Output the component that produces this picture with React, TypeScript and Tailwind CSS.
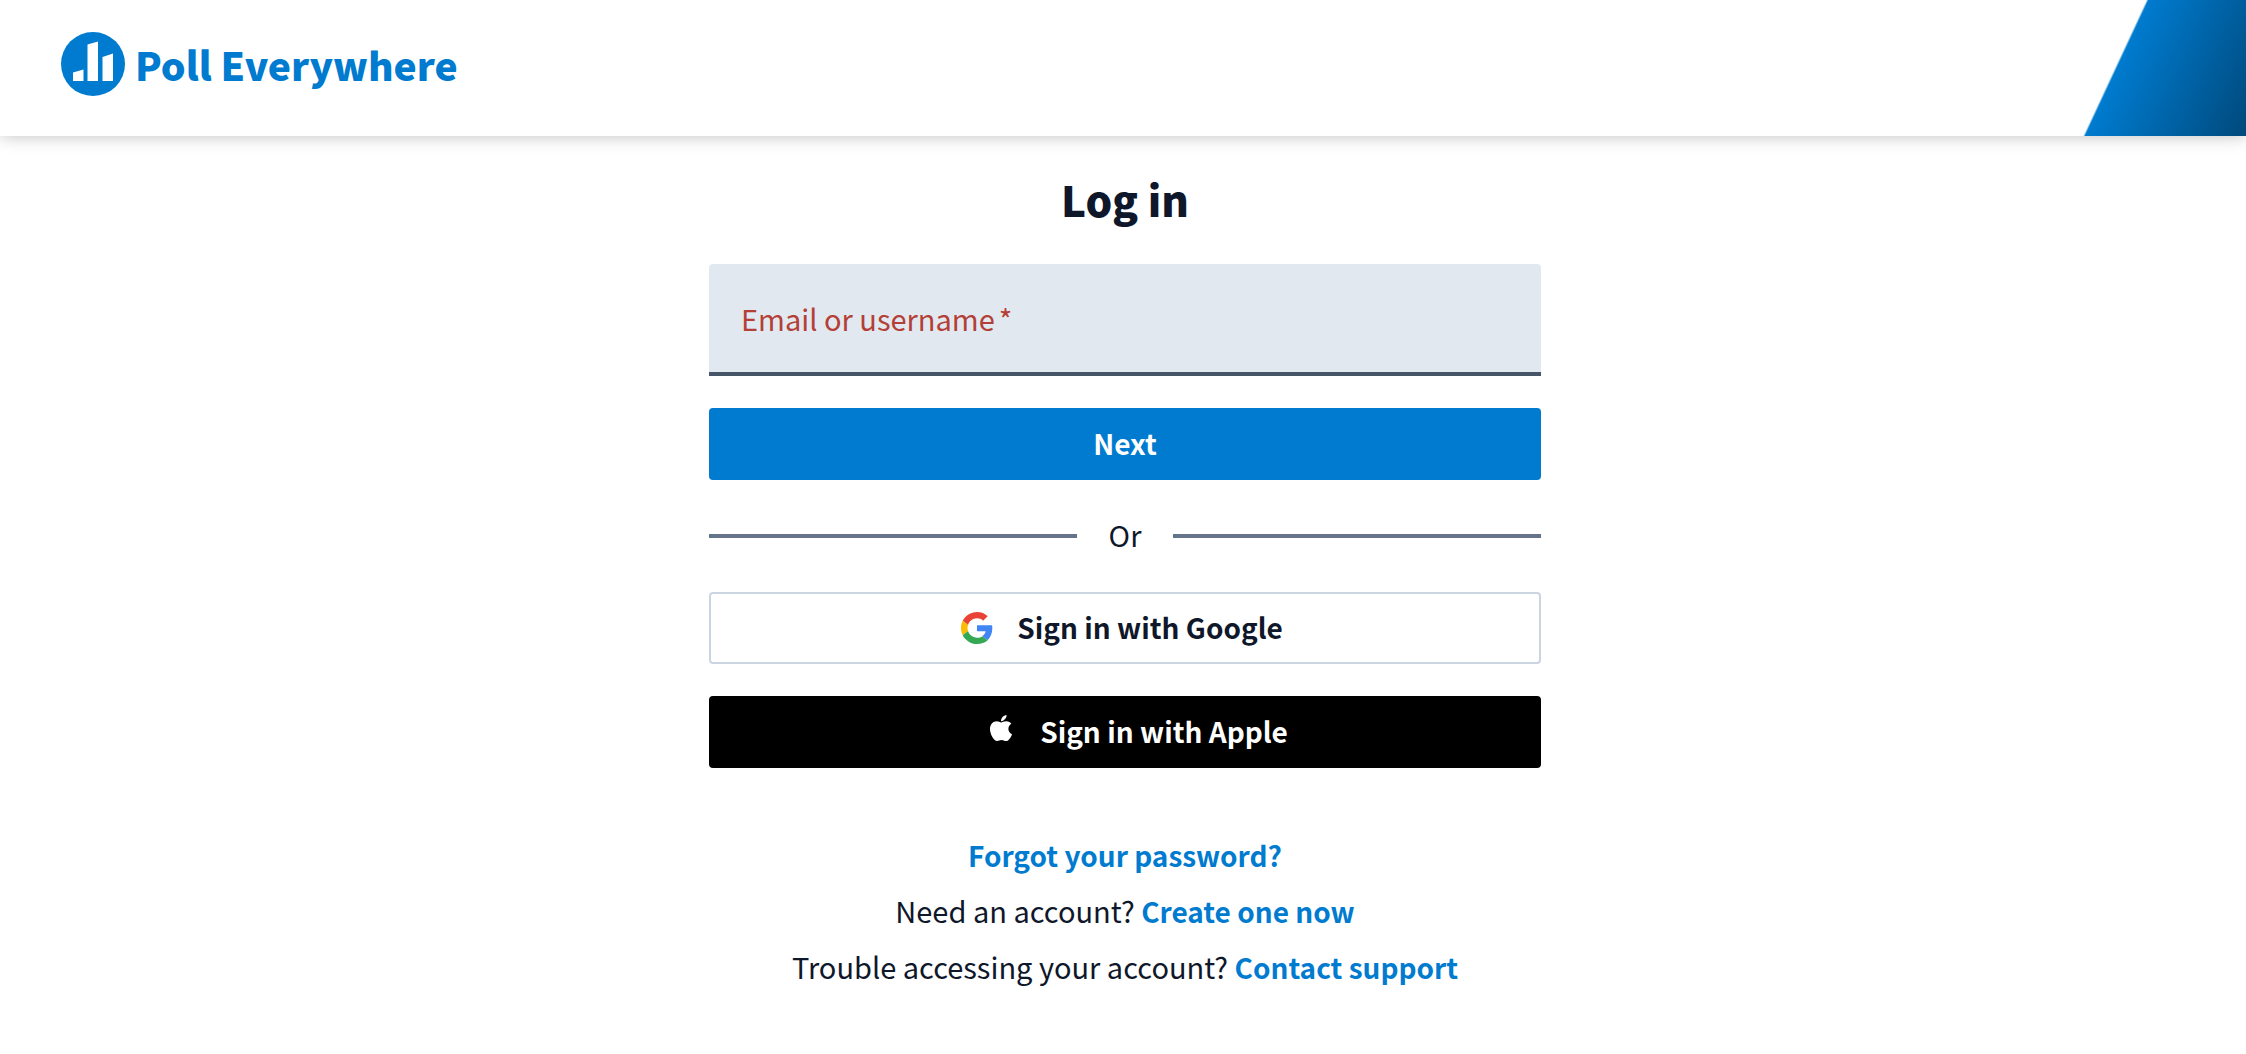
import { useState } from "react";
import { FaApple } from "react-icons/fa";

function Logo() {
	return (
		<a href="#" className="flex items-center gap-2.5 text-[#007bcf]">
			<svg viewBox="0 0 64 64" className="size-16" aria-hidden="true">
				<circle cx="32" cy="32" r="32" fill="currentColor" />
				<path fill="#fff" d="M12 40.500l10.500-3V49H12zM26.500 12.500l10.500-3V49H26.500zM41.500 25l10.500-3.500V49H41.500z" />
			</svg>
			<span className="text-[39px] leading-none font-black">Poll Everywhere</span>
		</a>
	);
}

function GoogleIcon() {
	return (
		<svg viewBox="0 0 48 48" className="size-8" aria-hidden="true">
			<path
				fill="#EA4335"
				d="M24 9.5c3.54 0 6.71 1.22 9.21 3.6l6.85-6.85C35.900 2.380 30.470 0 24 0 14.620 0 6.510 5.380 2.560 13.220l7.980 6.190C12.430 13.720 17.740 9.500 24 9.500z"
			/>
			<path
				fill="#4285F4"
				d="M46.980 24.550c0-1.570-.15-3.090-.38-4.550H24v9.020h12.940c-.58 2.960-2.260 5.480-4.780 7.180l7.730 6c4.510-4.180 7.090-10.360 7.090-17.650z"
			/>
			<path fill="#FBBC05" d="M10.530 28.590c-.48-1.450-.76-2.990-.76-4.590s.27-3.140.76-4.590l-7.980-6.190C.920 16.460 0 20.120 0 24c0 3.880.920 7.540 2.560 10.780l7.970-6.190z" />
			<path
				fill="#34A853"
				d="M24 48c6.480 0 11.930-2.130 15.890-5.810l-7.730-6c-2.150 1.450-4.920 2.300-8.160 2.300-6.260 0-11.570-4.220-13.470-9.910l-7.980 6.190C6.510 42.620 14.620 48 24 48z"
			/>
		</svg>
	);
}

export default function App() {
	const [login, setLogin] = useState("");

	return (
		<div className="min-h-screen bg-white font-['Noto_Sans_CJK_SC',sans-serif] text-[29px] leading-10 text-[#0f172a]">
			<header className="flex h-34 items-stretch justify-between pl-[61px] shadow-[0_0_16px_rgba(0,0,0,0.25)]">
				<div className="pt-8">
					<Logo />
				</div>
				<div className="w-[163px] bg-[linear-gradient(115deg,transparent_28%,#007bcf_29%,#00497b)]" />
			</header>

			<main className="mx-auto flex w-full max-w-[836px] flex-col pt-8 pl-1">
				<h1 className="text-center text-[42px] leading-[62px] font-black">Log in</h1>

				<form className="mt-[34px] flex flex-col gap-8" onSubmit={(e) => e.preventDefault()}>
					<div className="relative">
						<input
							id="login"
							type="text"
							required
							value={login}
							onChange={(e) => setLogin(e.target.value)}
							className="block h-28 w-full rounded-t border-b-4 border-[#475569] bg-[#e2e8f0] px-8 outline-none"
						/>
						{!login && (
							<label htmlFor="login" className="pointer-events-none absolute inset-y-0 left-8 flex items-center gap-1 pb-1 text-[#b33f36]">
								Email or username<span>*</span>
							</label>
						)}
					</div>
					<button type="submit" className="h-18 cursor-pointer rounded bg-[#007bcf] pb-0.5 text-[28px] font-bold text-white">
						Next
					</button>
				</form>

				<div className="my-9 flex h-10 items-center gap-8">
					<div className="h-1 flex-1 bg-[#64748b]" />
					<span className="pb-1">Or</span>
					<div className="h-1 flex-1 bg-[#64748b]" />
				</div>

				<div className="flex flex-col gap-8 text-[28px] font-bold">
					<button type="button" className="flex h-18 cursor-pointer items-center justify-center gap-6 rounded border-2 border-[#cbd5e1] pr-1.5">
						<GoogleIcon />
						<span className="pb-0.5">Sign in with Google</span>
					</button>
					<button type="button" className="flex h-18 cursor-pointer items-center justify-center gap-6 rounded bg-black pl-6 text-white">
						<FaApple className="size-[30px] -translate-y-1" />
						<span className="pb-0.5">Sign in with Apple</span>
					</button>
				</div>

				<div className="mt-[66px] flex flex-col gap-4 text-center">
					<p>
						<a href="#" className="text-[28px] leading-none font-bold text-[#007bcf]">
							Forgot your password?
						</a>
					</p>
					<p>
						Need an account?{" "}
						<a href="#" className="text-[28px] leading-none font-bold text-[#007bcf]">
							Create one now
						</a>
					</p>
					<p>
						Trouble accessing your account?{" "}
						<a href="#" className="text-[28px] leading-none font-bold text-[#007bcf]">
							Contact support
						</a>
					</p>
				</div>
			</main>
		</div>
	);
}
